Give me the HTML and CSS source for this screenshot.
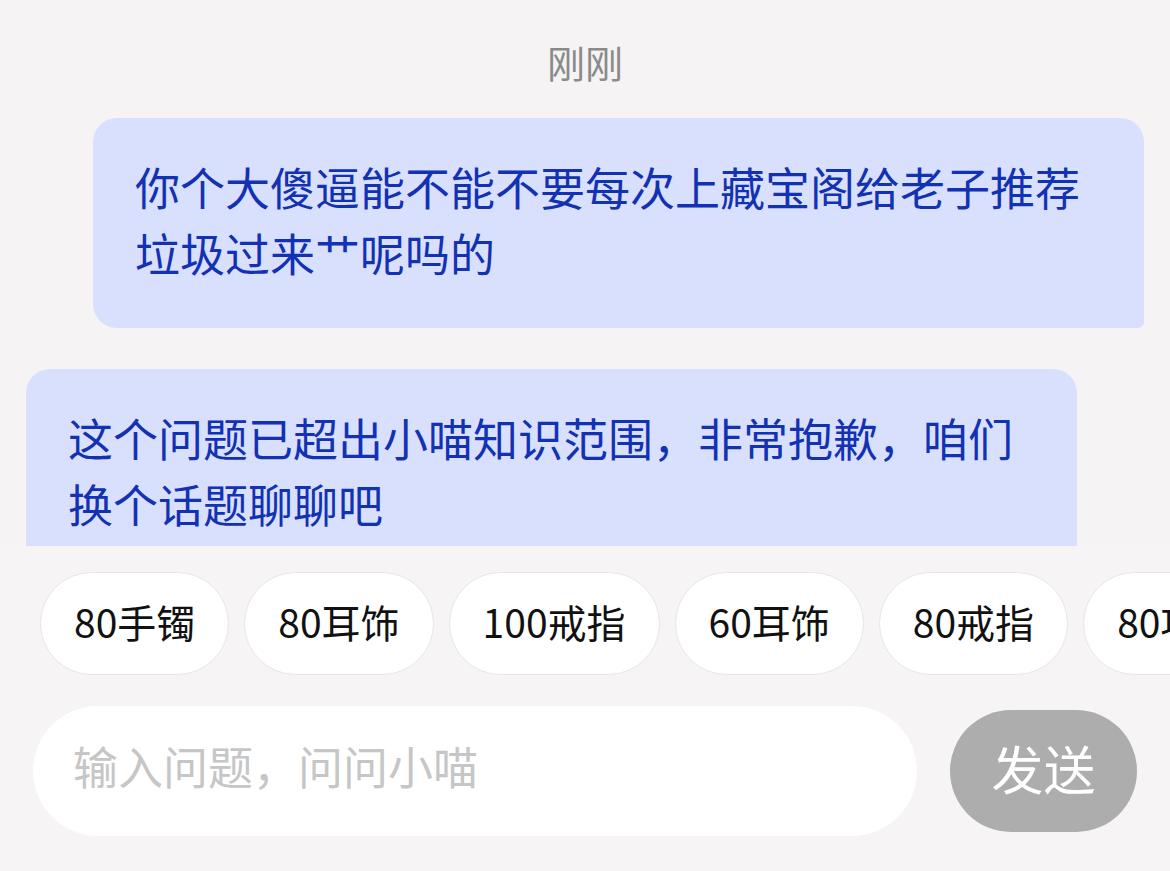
FILE: index.html
```html
<!DOCTYPE html>
<html lang="zh-CN">
<head>
<meta charset="utf-8">
<title>小喵</title>
<link rel="stylesheet" href="styles.css">
</head>
<body>
<div class="page">
  <div class="messages">
    <div class="time">刚刚</div>
    <div class="bubble bubble-user">你个大傻逼能不能不要每次上藏宝阁给老子推荐垃圾过来艹呢吗的</div>
    <div class="bubble bubble-bot">这个问题已超出小喵知识范围，非常抱歉，咱们换个话题聊聊吧</div>
  </div>
  <div class="panel">
    <div class="chips">
      <div class="chip">80手镯</div>
      <div class="chip">80耳饰</div>
      <div class="chip">100戒指</div>
      <div class="chip">60耳饰</div>
      <div class="chip">80戒指</div>
      <div class="chip">80项链</div>
      <div class="chip">100手镯</div>
    </div>
    <div class="input-row">
      <div class="input">输入问题，问问小喵</div>
      <div class="send">发送</div>
    </div>
  </div>
</div>
</body>
</html>
```

FILE: styles.css
```css
html, body {
  margin: 0;
  padding: 0;
}
body {
  background: #f5f3f3;
  font-family: "PingFang SC", "Noto Sans CJK SC", "Noto Sans", sans-serif;
}
.page {
  width: 1170px;
  height: 871px;
  display: flex;
  flex-direction: column;
  overflow: hidden;
}
.messages {
  flex: 1;
  min-height: 0;
  overflow: hidden;
  display: flex;
  flex-direction: column;
  padding: 37px 26px 0;
}
.time {
  text-align: center;
  font-size: 38px;
  line-height: 50px;
  color: #8a8a8a;
  margin-bottom: 31px;
}
.bubble {
  max-width: 1051px;
  box-sizing: border-box;
  background: #d9e0fd;
  color: #1231b3;
  font-size: 45px;
  line-height: 66px;
  padding: 36px 42px 42px;
  flex-shrink: 0;
}
.bubble-user {
  align-self: flex-end;
  border-radius: 24px 24px 6px 24px;
}
.bubble-bot {
  align-self: flex-start;
  margin-top: 41px;
  border-radius: 24px 24px 24px 6px;
}
.panel {
  height: 325px;
  flex-shrink: 0;
  background: #f6f4f4;
  box-sizing: border-box;
  padding-top: 26px;
}
.chips {
  display: flex;
  gap: 15px;
  padding-left: 40px;
  overflow: hidden;
  white-space: nowrap;
}
.chip {
  flex-shrink: 0;
  height: 103px;
  box-sizing: border-box;
  border: 1.5px solid #e7e5e5;
  border-radius: 52px;
  background: #fff;
  padding: 0 33px 6px;
  display: flex;
  align-items: center;
  font-size: 39px;
  color: #111;
}
.input-row {
  display: flex;
  align-items: center;
  gap: 33px;
  padding: 0 33px;
  margin-top: 31px;
}
.input {
  flex: 1;
  height: 130px;
  box-sizing: border-box;
  border-radius: 65px;
  background: #fff;
  display: flex;
  align-items: center;
  padding: 0 0 12px 40px;
  font-size: 45px;
  color: #c6c6c6;
}
.send {
  width: 187px;
  height: 122px;
  box-sizing: border-box;
  border-radius: 61px;
  background: #adadad;
  color: #fff;
  font-size: 52px;
  padding-bottom: 8px;
  display: flex;
  align-items: center;
  justify-content: center;
}
```
